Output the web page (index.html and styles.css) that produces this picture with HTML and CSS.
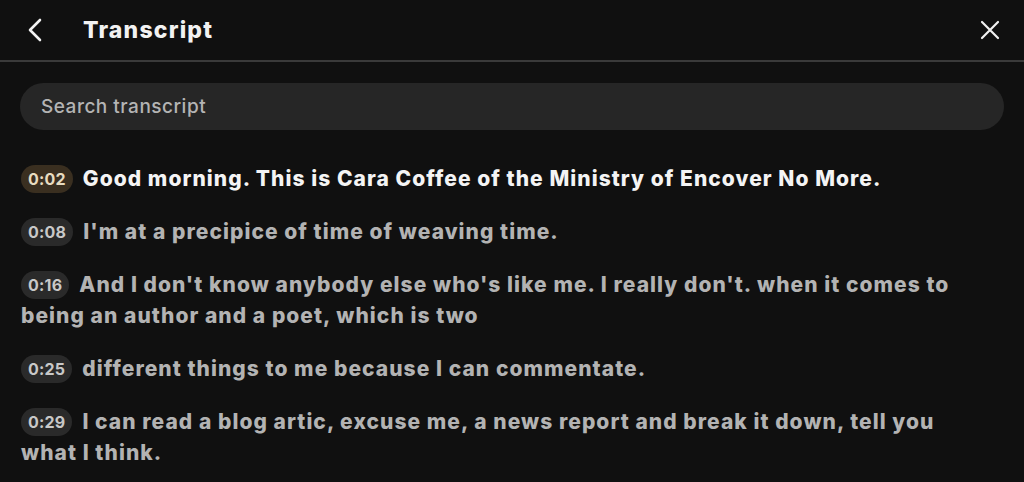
FILE: index.html
```html
<!DOCTYPE html>
<html>
<head>
<meta charset="utf-8">
<link rel="stylesheet" href="styles.css">
</head>
<body>
<div class="app">
  <header class="header">
    <button class="icon-btn back" aria-label="Back">
      <svg width="18" height="26" viewBox="0 0 18 26"><path d="M14 3 L4 13 L14 23" fill="none" stroke="#f2f2f2" stroke-width="2.6" stroke-linecap="round" stroke-linejoin="round"/></svg>
    </button>
    <h1 class="title">Transcript</h1>
    <button class="icon-btn close" aria-label="Close">
      <svg width="20" height="20" viewBox="0 0 20 20"><path d="M2 2 L18 18 M18 2 L2 18" fill="none" stroke="#f2f2f2" stroke-width="2.2" stroke-linecap="round"/></svg>
    </button>
  </header>
  <div class="search-wrap">
    <div class="search">Search transcript</div>
  </div>
  <div class="list">
    <p class="seg active"><span class="ts">0:02</span><span class="txt">Good morning. This is Cara Coffee of the Ministry of Encover No More.</span></p>
    <p class="seg"><span class="ts">0:08</span><span class="txt">I'm at a precipice of time of weaving time.</span></p>
    <p class="seg"><span class="ts">0:16</span><span class="txt">And I don't know anybody else who's like me. I really don't. when it comes to being an author and a poet, which is two</span></p>
    <p class="seg"><span class="ts">0:25</span><span class="txt">different things to me because I can commentate.</span></p>
    <p class="seg"><span class="ts">0:29</span><span class="txt">I can read a blog artic, excuse me, a news report and break it down, tell you what I think.</span></p>
  </div>
</div>
</body>
</html>
```
FILE: styles.css
```css
* { box-sizing: border-box; }
html, body { margin: 0; padding: 0; background: #101010; }
body { font-family: Inter, "Noto Sans", sans-serif; color: #f2f2f2; }
.app { width: 1024px; height: 482px; overflow: hidden; }
.header {
  height: 62px;
  display: flex;
  align-items: center;
  border-bottom: 2px solid #3a3a3a;
  padding: 0 24px 0 26px;
}
.icon-btn { background: none; border: 0; padding: 0; display: flex; align-items: center; cursor: pointer; }
.back { width: 57px; }
.title { margin: 0; font-size: 23px; font-weight: 800; flex: 1; letter-spacing: 1.2px; }
.search-wrap { padding: 21px 20px 0 20px; }
.search {
  height: 47px;
  border-radius: 24px;
  background: #262626;
  color: #b4b4b4;
  font-size: 19px;
  font-weight: 500;
  letter-spacing: 0.5px;
  display: flex;
  align-items: center;
  padding-left: 21px;
}
.list { padding: 33px 36px 0 21px; }
.seg {
  margin: 0 0 22px 0;
  font-size: 21px;
  line-height: 31px;
  font-weight: 800;
  letter-spacing: 1.05px;
  color: #b3b3b3;
}
.seg.active { color: #f4f4f4; }
.ts {
  display: inline-block;
  vertical-align: 1px;
  height: 28px;
  line-height: 28px;
  padding: 0 7px;
  margin-right: 10px;
  border-radius: 14px;
  background: #2a2a2a;
  color: #c8c8c8;
  font-size: 16px;
  font-weight: 700;
  letter-spacing: 0.2px;
}
.active .ts { background: #3a2f20; color: #e8dcc0; }
```
